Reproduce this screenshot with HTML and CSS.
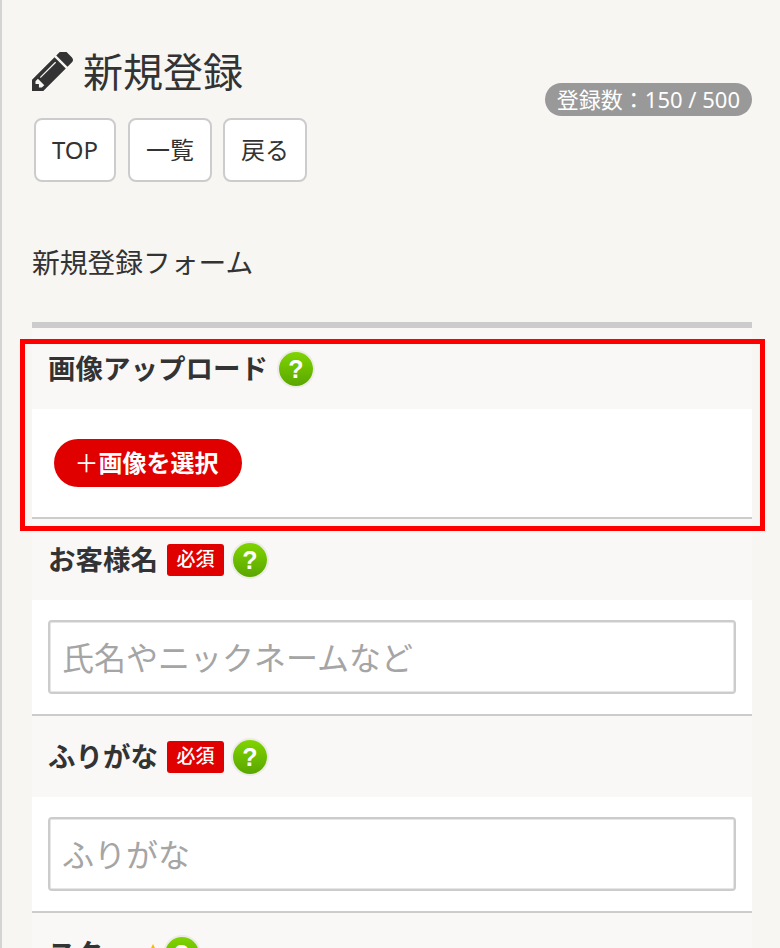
FILE: index.html
```html
<!DOCTYPE html>
<html lang="ja">
  <head>
    <meta charset="UTF-8" />
    <meta name="viewport" content="width=device-width, initial-scale=1.0" />
    <title>新規登録</title>
    <link rel="stylesheet" href="styles.css">
  </head>
  <body>
    <div class="container">
      <div class="head">
        <h1>
          <svg class="pencil" viewBox="128 256 1515 1408"><path d="M491 1536l91-91-235-235-91 91v107h128v128h107zm523-928q0-22-22-22-10 0-17 7l-542 542q-7 7-7 17 0 22 22 22 10 0 17-7l542-542q7-7 7-17zm-54-192l416 416-832 832h-416v-416zm683 96q0 53-37 90l-166 166-416-416 165-166q36-38 90-38 53 0 91 38l235 234q37 39 37 91z"/></svg>
          新規登録
        </h1>
        <div class="count">登録数：150 / 500</div>
      </div>
      <div class="nav">
        <a class="nav-btn nav-top">TOP</a>
        <a class="nav-btn">一覧</a>
        <a class="nav-btn">戻る</a>
      </div>
      <p class="lead">新規登録フォーム</p>

      <form id="form">
        <div class="field field-upload">
          <div class="field-label">画像アップロード <span class="help">?</span></div>
          <div class="field-body upload-body">
            <button type="button" class="upload-btn"><span class="plus">＋</span>画像を選択</button>
          </div>
          <div class="highlight"></div>
        </div>
        <div class="field">
          <div class="field-label">お客様名 <span class="required">必須</span> <span class="help">?</span></div>
          <div class="field-body">
            <input type="text" placeholder="氏名やニックネームなど" />
          </div>
        </div>
        <div class="field">
          <div class="field-label">ふりがな <span class="required">必須</span> <span class="help">?</span></div>
          <div class="field-body">
            <input type="text" placeholder="ふりがな" />
          </div>
        </div>
        <div class="field">
          <div class="field-label field-label-star">スター
            <svg class="star" viewBox="0 0 24 24"><path d="M12 1l3.4 7.2 7.6 1-5.600 5.300 1.500 7.800-6.900-3.800-6.900 3.800 1.500-7.800L1 9.200l7.600-1z"/></svg>
            <span class="help">?</span>
          </div>
        </div>
      </form>
    </div>
  </body>
</html>
```

FILE: styles.css
```css
* {
  box-sizing: border-box;
}
html,
body {
  margin: 0;
  height: 100%;
}
body {
  background-color: #f7f6f3;
  color: #333;
  font-family: "Noto Sans", "Noto Sans CJK JP", sans-serif;
}
.container {
  height: 948px;
  overflow: hidden;
  border-left: 2px solid #d4d4d4;
  padding: 42px 28px 0 30px;
}
.head {
  display: flex;
  justify-content: space-between;
}
h1 {
  display: flex;
  align-items: center;
  gap: 10px;
  margin: 0 0 16px;
  height: 60px;
  font-size: 40px;
  font-weight: 400;
  line-height: 56px;
}
.pencil {
  width: 41px;
  height: 40px;
  fill: #333;
}
.count {
  margin-top: 41px;
  height: 33px;
  padding: 0 12px;
  border-radius: 17px;
  background-color: #999;
  color: #fff;
  font-size: 22px;
  line-height: 32px;
}
.nav {
  display: flex;
  gap: 11px;
  margin-left: 2px;
}
.nav-btn {
  display: block;
  height: 64px;
  width: 84px;
  border: 2px solid #ccc;
  border-radius: 8px;
  background-color: #fff;
  font-size: 24px;
  line-height: 60px;
  text-align: center;
}
.nav-top {
  width: 82px;
  margin-right: 1px;
}
.lead {
  margin: 60px 0 40px;
  font-size: 27.75px;
  line-height: 40px;
  height: 40px;
}
#form {
  border-top: 6px solid #ccc;
}
.field {
  position: relative;
  border-bottom: 2px solid #ccc;
  background-color: #f9f8f6;
}
.field-label {
  display: flex;
  align-items: center;
  height: 81px;
  padding: 0 16px;
  font-size: 27.5px;
  font-weight: 700;
  line-height: 78px;
}
.field-body {
  height: 114px;
  padding: 20px 16px;
  background-color: #fff;
}
.upload-body {
  height: 108px;
  padding: 30px 22px;
}
.upload-btn {
  height: 48px;
  width: 188px;
  padding: 0 3px 3px 0;
  border: 0;
  border-radius: 24px;
  background-color: #e00000;
  color: #fff;
  font-family: inherit;
  font-size: 24px;
  font-weight: 700;
}
.plus {
  font-weight: 400;
}
.highlight {
  position: absolute;
  z-index: 1;
  top: 11px;
  left: -12px;
  right: -13px;
  bottom: -14px;
  border: 5px solid #f00;
  pointer-events: none;
}
input {
  display: block;
  width: 100%;
  height: 74px;
  padding: 0 0 0 12px;
  border: 2px solid #ccc;
  border-radius: 4px;
  background-color: #fff;
  box-shadow: inset 0 0 0 1px #e6e6e6;
  font-family: inherit;
  font-size: 32px;
}
input::placeholder {
  color: #a5a5a5;
}
.help {
  display: block;
  flex: none;
  width: 34px;
  height: 34px;
  margin-left: 11px;
  border-radius: 50%;
  background: linear-gradient(#80d400, #5aa600);
  box-shadow: 0 0 0 2px #ecebe7;
  color: #fff;
  font-family: "Liberation Sans", sans-serif;
  font-size: 25px;
  line-height: 34px;
  text-align: center;
}
.required {
  display: block;
  flex: none;
  width: 57px;
  height: 32px;
  margin-left: 9px;
  border-radius: 3px;
  background-color: #e00000;
  color: #fff;
  font-size: 19px;
  font-weight: 500;
  line-height: 31px;
  text-align: center;
}
.required + .help {
  margin-left: 9px;
}
.star {
  width: 22px;
  height: 22px;
  margin-left: 11px;
  fill: #fbb900;
}
.field-label-star .help {
  margin-left: 1px;
}
```
